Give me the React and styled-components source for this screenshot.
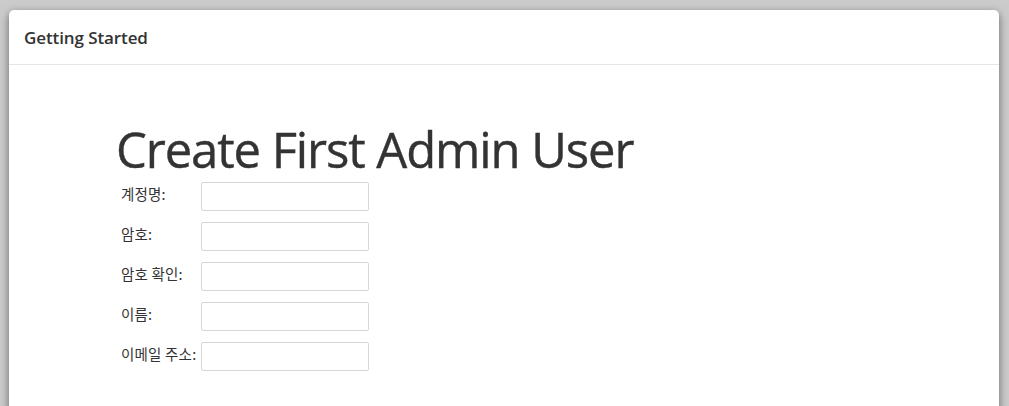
import React from "react";
import styled, { createGlobalStyle } from "styled-components";

const GlobalStyle = createGlobalStyle`
  html, body {
    margin: 0;
    padding: 0;
    background: #cbcbcb;
    font-family: "Open Sans", "Noto Sans CJK KR", sans-serif;
    color: #333;
    overflow: hidden;
  }
`;

const Page = styled.div`
  padding: 10px 10px 0 9px;
  height: 406px;
  box-sizing: border-box;
  overflow: hidden;
`;

const Dialog = styled.div`
  background: #fff;
  border-radius: 5px 5px 0 0;
  height: 406px;
  box-shadow: 0 3px 9px rgba(0, 0, 0, 0.5);
`;

const Header = styled.div`
  height: 55px;
  box-sizing: border-box;
  padding: 0 15px;
  display: flex;
  align-items: center;
  border-bottom: 1px solid #e5e5e5;
`;

const HeaderTitle = styled.h4`
  margin: 0;
  font-size: 17px;
  font-weight: 600;
  color: #333;
  letter-spacing: -0.1px;
`;

const Body = styled.div`
  padding: 55px 0 0 107px;
`;

const Title = styled.h1`
  margin: 0;
  font-size: 49px;
  font-weight: 500;
  line-height: 1.2;
  color: #333;
  letter-spacing: -1.1px;
  -webkit-text-stroke: 0.4px #333;
`;

const Form = styled.div`
  display: flex;
  flex-direction: column;
  gap: 11px;
  margin-top: 3px;
  padding-left: 5px;
`;

const Row = styled.div`
  display: flex;
  align-items: center;
`;

const Label = styled.label`
  width: 80px;
  font-family: "Noto Sans CJK KR", sans-serif;
  font-size: 14.5px;
  letter-spacing: 0.2px;
  color: #333;
  padding-bottom: 5px;
  white-space: nowrap;
`;

const Input = styled.input`
  width: 168px;
  height: 29px;
  box-sizing: border-box;
  border: 1px solid #d6d6d6;
  border-radius: 2px;
  outline: none;
  padding: 2px 6px;
  font-size: 13px;
`;

const fields = [
  { label: "계정명:", type: "text" },
  { label: "암호:", type: "password" },
  { label: "암호 확인:", type: "password" },
  { label: "이름:", type: "text" },
  { label: "이메일 주소:", type: "text" },
];

export default function App() {
  return (
    <Page>
      <GlobalStyle />
      <Dialog>
        <Header>
          <HeaderTitle>Getting Started</HeaderTitle>
        </Header>
        <Body>
          <Title>Create First Admin User</Title>
          <Form>
            {fields.map((f) => (
              <Row key={f.label}>
                <Label>{f.label}</Label>
                <Input type={f.type} />
              </Row>
            ))}
          </Form>
        </Body>
      </Dialog>
    </Page>
  );
}
